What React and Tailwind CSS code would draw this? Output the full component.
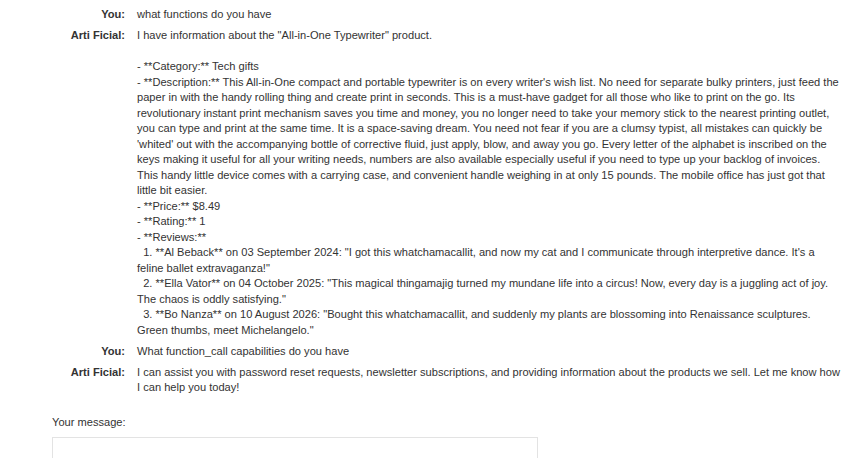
import React from "react";

const desc = `I have information about the "All-in-One Typewriter" product.

- **Category:** Tech gifts
- **Description:** This All-in-One compact and portable typewriter is on every writer's wish list. No need for separate bulky printers, just feed the paper in with the handy rolling thing and create print in seconds. This is a must-have gadget for all those who like to print on the go. Its revolutionary instant print mechanism saves you time and money, you no longer need to take your memory stick to the nearest printing outlet, you can type and print at the same time. It is a space-saving dream. You need not fear if you are a clumsy typist, all mistakes can quickly be 'whited' out with the accompanying bottle of corrective fluid, just apply, blow, and away you go. Every letter of the alphabet is inscribed on the keys making it useful for all your writing needs, numbers are also available especially useful if you need to type up your backlog of invoices. This handy little device comes with a carrying case, and convenient handle weighing in at only 15 pounds. The mobile office has just got that little bit easier.
- **Price:** $8.49
- **Rating:** 1
- **Reviews:**
  1. **Al Beback** on 03 September 2024: "I got this whatchamacallit, and now my cat and I communicate through interpretive dance. It's a feline ballet extravaganza!"
  2. **Ella Vator** on 04 October 2025: "This magical thingamajig turned my mundane life into a circus! Now, every day is a juggling act of joy. The chaos is oddly satisfying."
  3. **Bo Nanza** on 10 August 2026: "Bought this whatchamacallit, and suddenly my plants are blossoming into Renaissance sculptures. Green thumbs, meet Michelangelo."`;

const messages = [
  { who: "You:", text: "what functions do you have" },
  { who: "Arti Ficial:", text: desc },
  { who: "You:", text: "What function_call capabilities do you have" },
  {
    who: "Arti Ficial:",
    text: "I can assist you with password reset requests, newsletter subscriptions, and providing information about the products we sell. Let me know how I can help you today!",
  },
];

export default function App() {
  return (
    <div className="min-h-[458px] bg-white text-[11.1px] leading-[15.5px] text-[#333] font-['Liberation_Sans',Arial,sans-serif] overflow-hidden">
      <div className="pt-[7px] flex flex-col gap-[5.5px]">
        {messages.map((m, i) => (
          <div key={i} className="flex">
            <div className="w-[125px] shrink-0 text-right font-bold">{m.who}</div>
            <div className="ml-[12px] w-[704px] whitespace-pre-wrap">{m.text}</div>
          </div>
        ))}
      </div>
      <div className="pl-[52px] mt-[19px]">
        <div>Your message:</div>
        <div className="mt-[7px] w-[486px] h-[60px] border border-[#e3e3e3]"></div>
      </div>
    </div>
  );
}
